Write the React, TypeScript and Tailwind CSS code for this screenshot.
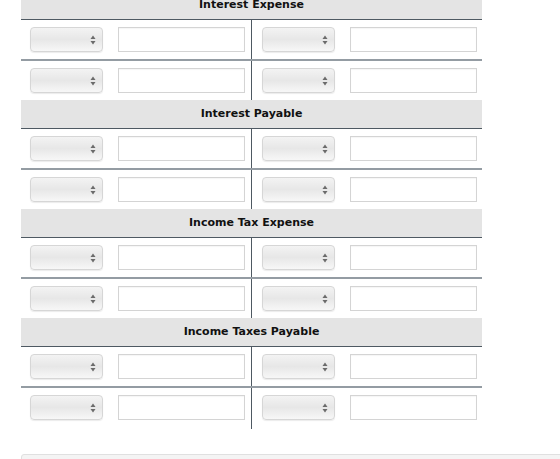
const accounts = [
  "Interest Expense",
  "Interest Payable",
  "Income Tax Expense",
  "Income Taxes Payable",
];

function SelectBox() {
  return (
    <div className="flex h-[25px] w-[73px] items-center justify-end rounded-[4px] border border-[#d6d6d6] bg-gradient-to-b from-[#f3f3f3] via-[#e7e7e7] to-[#f7f7f7] pr-[6px] shadow-[0_1px_1px_rgba(0,0,0,0.08)]">
      <svg width="6" height="10" viewBox="0 0 6 10">
        <path d="M3 0.5 L5.5 4 L0.5 4 Z" fill="#6b6b6b" />
        <path d="M3 9.5 L5.5 6 L0.5 6 Z" fill="#6b6b6b" />
      </svg>
    </div>
  );
}

function Entry() {
  return (
    <div className="flex items-center gap-[15px]">
      <SelectBox />
      <input
        type="text"
        className="h-[25px] w-[127px] border border-[#d4d4d4] bg-white shadow-[inset_0_1px_1px_rgba(0,0,0,0.04)] outline-none"
      />
    </div>
  );
}

function Row({ divider }: { divider: boolean }) {
  return (
    <div className={`flex ${divider ? "border-b-2 border-[#949ca3]" : ""}`}>
      <div className="h-[39px] w-[231px] border-r border-[#4e5962] pl-[9px] pt-[7px]">
        <Entry />
      </div>
      <div className="h-[39px] w-[230px] pl-[10px] pt-[7px]">
        <Entry />
      </div>
    </div>
  );
}

function Account({ title }: { title: string }) {
  return (
    <div>
      <div className="flex h-[29px] items-center justify-center border-b border-[#4e5962] bg-[#e4e4e4] text-[11px] font-bold text-[#111]">
        {title}
      </div>
      <Row divider />
      <Row divider={false} />
    </div>
  );
}

export default function App() {
  return (
    <div className="h-[459px] overflow-hidden bg-white font-['DejaVu_Sans',Verdana,sans-serif]">
      <div className="ml-[21px] mt-[-9px] w-[461px]">
        {accounts.map((a) => (
          <Account key={a} title={a} />
        ))}
        <div className="h-[2px] w-[231px] border-r border-[#4e5962]" />
      </div>
      <div className="ml-[21px] mt-[25px] h-[40px] w-[560px] rounded-tl-[3px] border border-[#e0e0e0] bg-[#f4f4f4]" />
    </div>
  );
}
